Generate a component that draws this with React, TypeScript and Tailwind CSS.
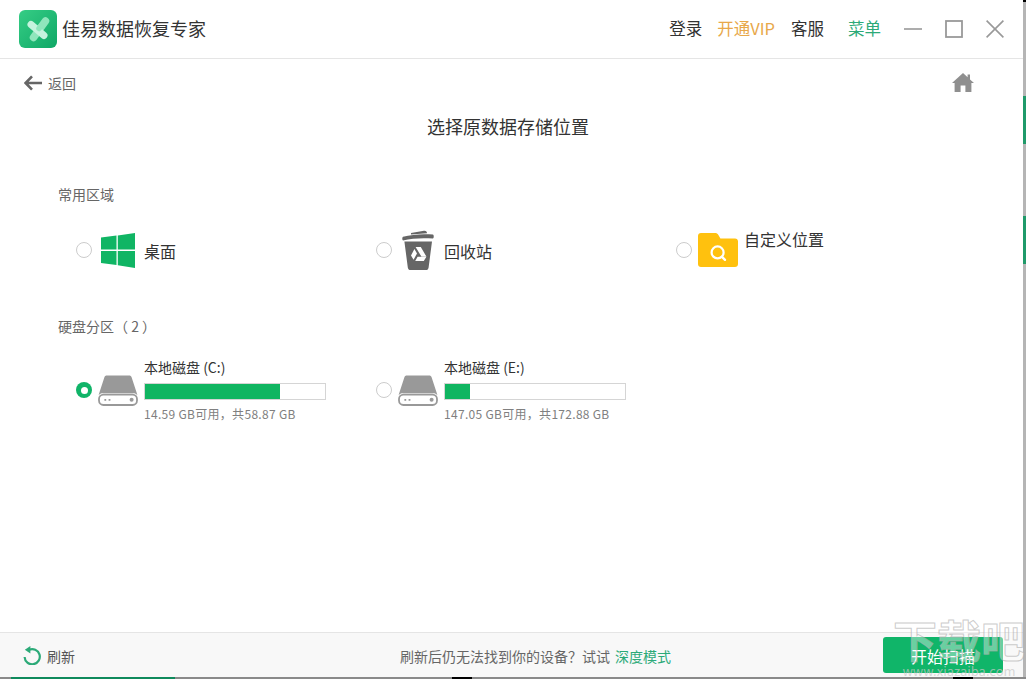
import { ReactNode } from "react";

const FONT = "font-['Noto_Sans_CJK_SC','Liberation_Sans',sans-serif]";

function Radio({ checked, className = "" }: { checked?: boolean; className?: string }) {
  if (checked) {
    return (
      <span className={`flex h-4 w-4 shrink-0 items-center justify-center rounded-full bg-[#10b468] ${className}`}>
        <span className="h-[7px] w-[7px] rounded-full bg-white" />
      </span>
    );
  }
  return <span className={`h-4 w-4 shrink-0 rounded-full border border-[#cccccc] bg-white ${className}`} />;
}

function Logo() {
  return (
    <svg viewBox="0 0 38 38" className="h-[38px] w-[38px] shrink-0">
      <defs>
        <linearGradient id="logoBg" x1="0" y1="0" x2="1" y2="1">
          <stop offset="0" stopColor="#35cd85" />
          <stop offset="1" stopColor="#0fa766" />
        </linearGradient>
      </defs>
      <rect width="38" height="38" rx="6" fill="url(#logoBg)" />
      <path d="M26.5 11 L14.5 27.5" stroke="#8fe6bc" strokeWidth="7.5" strokeLinecap="round" />
      <path d="M12 14.5 L25 25.5" stroke="#c5f3de" strokeWidth="7" strokeLinecap="round" />
      <path d="M25 12.5 L20 18.5" stroke="#8fe6bc" strokeWidth="5.5" strokeLinecap="round" />
    </svg>
  );
}

function WindowsIcon() {
  return (
    <svg viewBox="0 0 34 35" className="ml-[9px] h-[35px] w-[34px]">
      <path d="M0 4.5 L15.5 2.6 V16.6 H0 Z M16.8 2.4 L34 0 V16.6 H16.8 Z M0 18 H15.5 V32 L0 30 Z M16.8 18 H34 V35 L16.8 32.3 Z" fill="#10b564" />
    </svg>
  );
}

function TrashIcon() {
  return (
    <svg viewBox="0 0 32 40" className="ml-[10px] h-10 w-8">
      <path d="M9 3 L22 0.8 C24 0.6 25 1.5 25 3.2 L9 4.6 Z" fill="#666666" />
      <path d="M1 6.8 C10 4.2 22 3.6 31 4.6 C32 5 32 8 31 8.6 C22 7.6 10 8.2 1 10.4 C0 10 0 7.4 1 6.8 Z" fill="#666666" />
      <path d="M2.4 11.6 H30 L26.6 37.4 C26.4 39 25.4 40 23.8 40 H8.6 C7 40 6 39 5.8 37.4 Z" fill="#666666" />
      <path d="M13.6 17 H18.8 L24.4 26.6 H19.4 Z M12.4 19 L15 23.4 L11.6 29.8 L9 25.4 Z M15.6 26.8 H24.4 L21.8 31 H13.2 Z" fill="#ffffff" />
    </svg>
  );
}

function FolderIcon() {
  return (
    <svg viewBox="0 0 40 34" className="ml-[6px] h-[34px] w-10">
      <path d="M3 0 H17 C18.5 0 19.5 .6 20.4 2 L22.4 5.4 H37 C38.8 5.4 40 6.6 40 8.4 V31 C40 32.8 38.8 34 37 34 H3 C1.2 34 0 32.8 0 31 V3 C0 1.2 1.2 0 3 0 Z" fill="#ffc10e" />
      <circle cx="19.6" cy="19.4" r="6" fill="none" stroke="#ffffff" strokeWidth="2.2" />
      <path d="M24 23.8 L27 26.8" stroke="#ffffff" strokeWidth="2.4" strokeLinecap="round" />
    </svg>
  );
}

function DiskIcon() {
  return (
    <svg viewBox="0 0 40 31" className="h-[31px] w-10">
      <path d="M9 0.4 H31 C32.4 0.4 33.2 1 33.6 2.2 L39.4 20 C37.6 18.6 36.6 18.2 35 18.2 H5 C3.4 18.2 2.4 18.6 0.6 20 L6.4 2.2 C6.8 1 7.6 .4 9 .4 Z" fill="#999999" />
      <rect x="1" y="19.6" width="38" height="10.4" rx="4.4" fill="#ffffff" stroke="#999999" strokeWidth="1.8" />
      <circle cx="33.6" cy="24.8" r="2" fill="#999999" />
      <rect x="6.4" y="24" width="1.8" height="1.8" fill="#999999" />
      <rect x="10.6" y="24" width="1.8" height="1.8" fill="#999999" />
    </svg>
  );
}

function Option({ icon, label, raised }: { icon: ReactNode; label: string; raised?: boolean }) {
  return (
    <div className="flex w-[300px] items-center">
      <Radio />
      <div className="flex w-[52px] shrink-0 items-center">{icon}</div>
      <span className={`text-base leading-6 text-[#333333] ${raised ? "mb-[22px]" : "mt-[2px]"}`}>{label}</span>
    </div>
  );
}

function Disk({ name, free, used, checked }: { name: string; free: string; used: number; checked?: boolean }) {
  return (
    <div className="flex w-[300px] items-center">
      <Radio checked={checked} className="mb-[1px]" />
      <div className="ml-[6px] mb-[1px]">
        <DiskIcon />
      </div>
      <div className="ml-[6px] w-[182px]">
        <div className="h-5 text-sm leading-[18px] text-[#333333]">{name}</div>
        <div className="mt-[5px] h-[17px] border border-[#d5d5d5] bg-white">
          <div className="h-full bg-[#10b561]" style={{ width: used }} />
        </div>
        <div className="mt-[5px] h-[18px] whitespace-nowrap text-xs leading-[18px] tracking-[0.3px] text-[#808080]">{free}</div>
      </div>
    </div>
  );
}

export default function App() {
  return (
    <div className={`relative flex h-[679px] w-[1026px] flex-col overflow-hidden bg-white ${FONT}`}>
      <div className="flex min-h-0 flex-1">
        <div className="flex min-w-0 flex-1 flex-col">
          {/* header */}
          <header className="flex h-[59px] shrink-0 items-center border-b border-[#e5e5e5] pl-[19px]">
            <Logo />
            <span className="mb-[2px] ml-[5px] text-lg text-[#333333]">佳易数据恢复专家</span>
            <nav className="mb-[2px] ml-auto flex items-center text-[16.5px] leading-6">
              <span className="text-[#333333]">登录</span>
              <span className="ml-[15px] text-[#e8a84a]">开通VIP</span>
              <span className="ml-4 text-[#333333]">客服</span>
              <span className="ml-6 text-[#2caa78]">菜单</span>
            </nav>
            <div className="ml-[23px] mr-[19px] flex items-center gap-[23px]">
              <svg viewBox="0 0 18 18" className="h-[18px] w-[18px]">
                <path d="M0 9 H18" stroke="#999999" strokeWidth="1.6" />
              </svg>
              <svg viewBox="0 0 18 18" className="h-[18px] w-[18px]">
                <rect x="1" y="1" width="16" height="16" fill="none" stroke="#999999" strokeWidth="1.8" />
              </svg>
              <svg viewBox="0 0 18 18" className="h-[18px] w-[18px]">
                <path d="M.6 .6 L17.4 17.4 M17.4 .6 L.6 17.4" stroke="#999999" strokeWidth="1.6" />
              </svg>
            </div>
          </header>

          {/* back row */}
          <div className="flex h-[50px] shrink-0 items-center pl-6 pr-[49px]">
            <svg viewBox="0 0 18 16" className="mb-[2px] h-4 w-[18px]">
              <path d="M8 1.4 L1.6 8 L8 14.6 M2 8 H18" fill="none" stroke="#666666" strokeWidth="2.6" />
            </svg>
            <span className="mb-[2px] ml-[6px] text-sm text-[#666666]">返回</span>
            <svg viewBox="0 0 22 19" className="mb-1 ml-auto h-[19px] w-[22px]">
              <path d="M11 0 L15.6 4.2 V1.4 H18 V6.4 L22 10 H19.4 V19 H13.4 V12.6 H8.6 V19 H2.6 V10 H0 Z" fill="#8f8f8f" />
            </svg>
          </div>

          <h1 className="h-9 shrink-0 pr-[7px] text-center text-lg font-normal leading-[34px] text-[#333333]">选择原数据存储位置</h1>

          <div className="pl-[58px]">
            <div className="mt-10 h-5 text-sm leading-[18px] text-[#666666]">常用区域</div>
            <div className="flex h-[90px] items-center pl-[18px]">
              <Option icon={<WindowsIcon />} label="桌面" />
              <Option icon={<TrashIcon />} label="回收站" />
              <Option icon={<FolderIcon />} label="自定义位置" raised />
            </div>
            <div className="mt-[22px] h-5 text-sm leading-[18px] text-[#666666]">硬盘分区（ 2 ）</div>
            <div className="mt-[21px] flex pl-[18px]">
              <Disk name="本地磁盘 (C:)" free="14.59 GB可用，共58.87 GB" used={135} checked />
              <Disk name="本地磁盘 (E:)" free="147.05 GB可用，共172.88 GB" used={25} />
            </div>
          </div>

          {/* footer */}
          <footer className="mt-auto flex h-[45px] shrink-0 items-center border-t border-[#e5e5e5] bg-[#f8f8f8] pl-[23px] pr-5">
            <svg viewBox="0 0 18 19" className="h-[19px] w-[18px]">
              <path d="M6 3.8 A7.6 7.6 0 1 1 1.6 11" fill="none" stroke="#2caa78" strokeWidth="2.2" />
              <path d="M7.4 0 V7.4 L1.8 3.8 Z" fill="#2caa78" />
            </svg>
            <span className="ml-[6px] mt-[2px] text-sm text-[#555555]">刷新</span>
            <span className="ml-[325px] mt-[2px] text-sm text-[#666666]">刷新后仍无法找到你的设备？试试</span>
            <span className="ml-[5px] mt-[2px] text-sm text-[#2caa78]">深度模式</span>
            <button type="button" className="ml-auto h-9 w-[120px] rounded-[3px] bg-[#10b569] pt-[2px] text-base text-white">
              开始扫描
            </button>
          </footer>
        </div>

        {/* edge of the window behind */}
        <div className="flex w-[3px] shrink-0 flex-col bg-[#b5b5b5]">
          <div className="h-[2px] bg-black" />
          <div className="mt-[94px] h-12 bg-[#1f9a6a]" />
          <div className="mt-[72px] h-12 bg-[#1f9a6a]" />
        </div>
      </div>

      <div className="flex h-[2px] shrink-0 bg-[#8a8a8a]">
        <div className="ml-[11px] w-[164px] bg-[#0f8a5c]" />
        <div className="ml-[277px] w-5 bg-black" />
        <div className="ml-[481px] w-5 bg-black" />
      </div>

      {/* watermark */}
      <div className="pointer-events-none absolute right-0 top-[615px] w-[134px] text-center">
        <div className="whitespace-nowrap text-[44px] font-bold leading-[49px] text-white/40 [-webkit-text-stroke:1px_rgba(170,170,170,0.6)]">下载吧</div>
        <div className="whitespace-nowrap text-[13px] leading-[13px] text-[#c8c8c8]/70">www.xiazaiba.com</div>
      </div>
    </div>
  );
}
